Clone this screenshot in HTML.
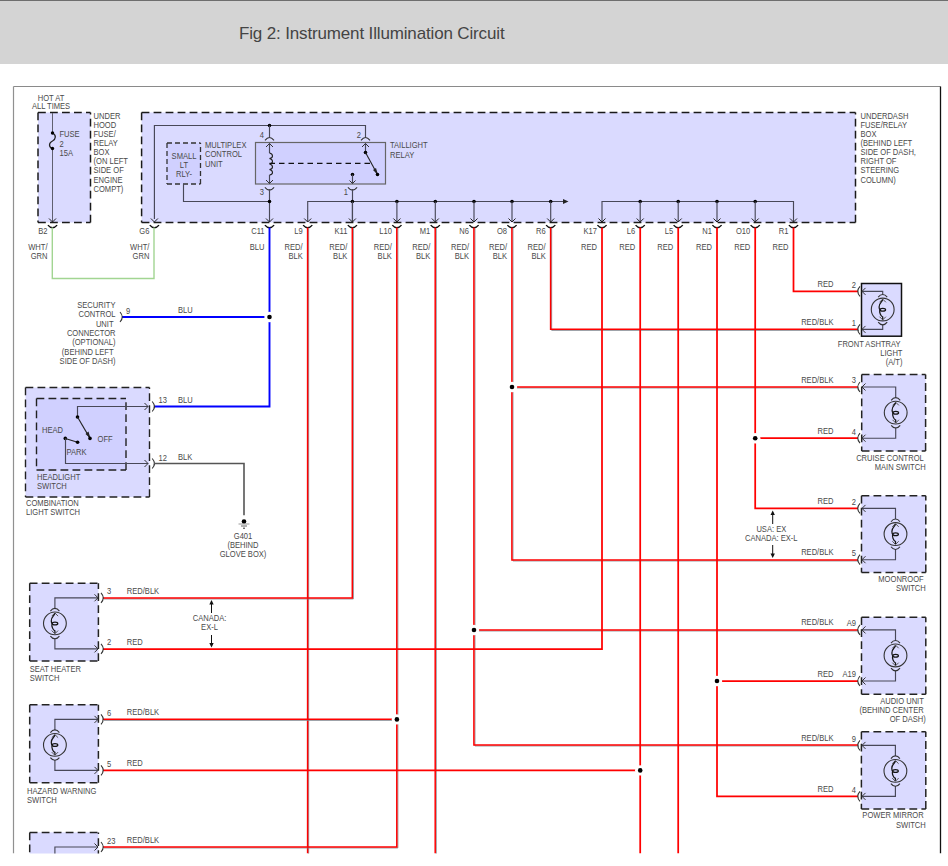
<!DOCTYPE html>
<html><head><meta charset="utf-8"><style>
html,body{margin:0;padding:0;background:#fff;width:948px;height:866px;overflow:hidden}
#hdr{position:absolute;left:0;top:0;width:948px;height:64px;background:#d4d4d4;border-top:1px solid #6e6e6e;box-sizing:border-box}
#ttl{position:absolute;left:239px;top:24px;font-family:"Liberation Sans",sans-serif;font-size:17px;color:#444;white-space:nowrap;letter-spacing:-0.15px}
svg{position:absolute;left:0;top:0}
svg text{white-space:pre;font-family:"Liberation Sans",sans-serif}
</style></head><body>
<div id="hdr"></div><div id="ttl">Fig 2: Instrument Illumination Circuit</div>
<svg width="948" height="866" viewBox="0 0 948 866">
<defs><clipPath id="cp"><rect x="0" y="64" width="948" height="789.5"/></clipPath></defs>
<g clip-path="url(#cp)">
<line x1="13.5" y1="86.5" x2="940.5" y2="86.5" stroke="#8a8a8a" stroke-width="1.2"/>
<line x1="13.5" y1="86.5" x2="13.5" y2="853.5" stroke="#909090" stroke-width="1.2"/>
<line x1="940.5" y1="86.5" x2="940.5" y2="853.5" stroke="#111" stroke-width="1.3"/>
<rect x="38" y="112.5" width="52.5" height="110.0" fill="#dadaff"/>
<line x1="38" y1="112.5" x2="90.5" y2="112.5" stroke="#1a1a1a" stroke-width="1.5" stroke-dasharray="7.8 4.2"/>
<line x1="38" y1="112.5" x2="38" y2="222.5" stroke="#1a1a1a" stroke-width="1.5" stroke-dasharray="7.8 4.2"/>
<line x1="38" y1="222.5" x2="90.5" y2="222.5" stroke="#1a1a1a" stroke-width="1.5" stroke-dasharray="7.8 4.2"/>
<line x1="90.5" y1="222.5" x2="90.5" y2="112.5" stroke="#1a1a1a" stroke-width="1.5" stroke-dasharray="7.8 4.2"/>
<rect x="141.6" y="112.5" width="713.9" height="110.0" fill="#dadaff"/>
<line x1="141.6" y1="112.5" x2="855.5" y2="112.5" stroke="#1a1a1a" stroke-width="1.5" stroke-dasharray="7.8 4.2"/>
<line x1="141.6" y1="112.5" x2="141.6" y2="222.5" stroke="#1a1a1a" stroke-width="1.5" stroke-dasharray="7.8 4.2"/>
<line x1="141.6" y1="222.5" x2="855.5" y2="222.5" stroke="#1a1a1a" stroke-width="1.5" stroke-dasharray="7.8 4.2"/>
<line x1="855.5" y1="222.5" x2="855.5" y2="112.5" stroke="#1a1a1a" stroke-width="1.5" stroke-dasharray="7.8 4.2"/>
<text transform="translate(51 101.0) scale(0.925 1)" font-size="8.2" text-anchor="middle" fill="#4a4a4a">HOT AT</text>
<text transform="translate(51 108.6) scale(0.925 1)" font-size="8.2" text-anchor="middle" fill="#4a4a4a">ALL TIMES</text>
<text transform="translate(93.5 118.8) scale(0.925 1)" font-size="8.2" text-anchor="start" fill="#4a4a4a">UNDER</text>
<text transform="translate(93.5 127.89999999999999) scale(0.925 1)" font-size="8.2" text-anchor="start" fill="#4a4a4a">HOOD</text>
<text transform="translate(93.5 137.0) scale(0.925 1)" font-size="8.2" text-anchor="start" fill="#4a4a4a">FUSE/</text>
<text transform="translate(93.5 146.1) scale(0.925 1)" font-size="8.2" text-anchor="start" fill="#4a4a4a">RELAY</text>
<text transform="translate(93.5 155.2) scale(0.925 1)" font-size="8.2" text-anchor="start" fill="#4a4a4a">BOX</text>
<text transform="translate(93.5 164.3) scale(0.925 1)" font-size="8.2" text-anchor="start" fill="#4a4a4a">(ON LEFT</text>
<text transform="translate(93.5 173.39999999999998) scale(0.925 1)" font-size="8.2" text-anchor="start" fill="#4a4a4a">SIDE OF</text>
<text transform="translate(93.5 182.5) scale(0.925 1)" font-size="8.2" text-anchor="start" fill="#4a4a4a">ENGINE</text>
<text transform="translate(93.5 191.6) scale(0.925 1)" font-size="8.2" text-anchor="start" fill="#4a4a4a">COMPT)</text>
<text transform="translate(59.5 137.0) scale(0.925 1)" font-size="8.2" text-anchor="start" fill="#4a4a4a">FUSE</text>
<text transform="translate(59.5 146.7) scale(0.925 1)" font-size="8.2" text-anchor="start" fill="#4a4a4a">2</text>
<text transform="translate(59.5 156.4) scale(0.925 1)" font-size="8.2" text-anchor="start" fill="#4a4a4a">15A</text>
<line x1="52.5" y1="113" x2="52.5" y2="133" stroke="#606070" stroke-width="1"/>
<line x1="52.5" y1="148.5" x2="52.5" y2="222" stroke="#606070" stroke-width="1"/>
<path d="M52.5 133 C56.5 135,56 139,52.5 141 C48.5 143,48.5 147,52.5 148.5" fill="none" stroke="#222" stroke-width="1.3"/>
<circle cx="52.5" cy="133" r="1.7" fill="#000"/>
<circle cx="52.5" cy="148.5" r="1.7" fill="#000"/>
<text transform="translate(860.5 118.8) scale(0.925 1)" font-size="8.2" text-anchor="start" fill="#4a4a4a">UNDERDASH</text>
<text transform="translate(860.5 127.89999999999999) scale(0.925 1)" font-size="8.2" text-anchor="start" fill="#4a4a4a">FUSE/RELAY</text>
<text transform="translate(860.5 137.0) scale(0.925 1)" font-size="8.2" text-anchor="start" fill="#4a4a4a">BOX</text>
<text transform="translate(860.5 146.1) scale(0.925 1)" font-size="8.2" text-anchor="start" fill="#4a4a4a">(BEHIND LEFT</text>
<text transform="translate(860.5 155.2) scale(0.925 1)" font-size="8.2" text-anchor="start" fill="#4a4a4a">SIDE OF DASH,</text>
<text transform="translate(860.5 164.3) scale(0.925 1)" font-size="8.2" text-anchor="start" fill="#4a4a4a">RIGHT OF</text>
<text transform="translate(860.5 173.39999999999998) scale(0.925 1)" font-size="8.2" text-anchor="start" fill="#4a4a4a">STEERING</text>
<text transform="translate(860.5 182.5) scale(0.925 1)" font-size="8.2" text-anchor="start" fill="#4a4a4a">COLUMN)</text>
<rect x="167" y="143" width="33.5" height="41" fill="#d0d0ff"/>
<line x1="167" y1="143" x2="200.5" y2="143" stroke="#333" stroke-width="1.3" stroke-dasharray="5 3"/>
<line x1="167" y1="143" x2="167" y2="184" stroke="#333" stroke-width="1.3" stroke-dasharray="5 3"/>
<line x1="167" y1="184" x2="200.5" y2="184" stroke="#333" stroke-width="1.3" stroke-dasharray="5 3"/>
<line x1="200.5" y1="184" x2="200.5" y2="143" stroke="#333" stroke-width="1.3" stroke-dasharray="5 3"/>
<text transform="translate(184 159.0) scale(0.925 1)" font-size="8.2" text-anchor="middle" fill="#4a4a4a">SMALL</text>
<text transform="translate(184 167.8) scale(0.925 1)" font-size="8.2" text-anchor="middle" fill="#4a4a4a">LT</text>
<text transform="translate(184 176.6) scale(0.925 1)" font-size="8.2" text-anchor="middle" fill="#4a4a4a">RLY-</text>
<text transform="translate(205 148.0) scale(0.925 1)" font-size="8.2" text-anchor="start" fill="#4a4a4a">MULTIPLEX</text>
<text transform="translate(205 157.4) scale(0.925 1)" font-size="8.2" text-anchor="start" fill="#4a4a4a">CONTROL</text>
<text transform="translate(205 166.8) scale(0.925 1)" font-size="8.2" text-anchor="start" fill="#4a4a4a">UNIT</text>
<rect x="255.5" y="142.5" width="130.0" height="41.5" fill="#d0d0ff" stroke="#666" stroke-width="1.2"/>
<text transform="translate(390 148.0) scale(0.925 1)" font-size="8.2" text-anchor="start" fill="#4a4a4a">TAILLIGHT</text>
<text transform="translate(390 157.6) scale(0.925 1)" font-size="8.2" text-anchor="start" fill="#4a4a4a">RELAY</text>
<polyline points="154.4,219 154.4,125.5 365.5,125.5 365.5,137" fill="none" stroke="#484858" stroke-width="1.15" stroke-linejoin="miter"/>
<circle cx="269.5" cy="125.5" r="1.8" fill="#000"/>
<line x1="269.5" y1="125.5" x2="269.5" y2="137" stroke="#484858" stroke-width="1.15"/>
<path d="M265.0 140.3 Q269.5 134.8 274.0 140.3" fill="none" stroke="#333" stroke-width="1.1"/>
<path d="M361.0 140.3 Q365.5 134.8 370.0 140.3" fill="none" stroke="#333" stroke-width="1.1"/>
<polyline points="266.0,147.0 269.5,143.5 273.0,147.0" fill="none" stroke="#333" stroke-width="1" stroke-linejoin="miter"/>
<polyline points="362.0,147.0 365.5,143.5 369.0,147.0" fill="none" stroke="#333" stroke-width="1" stroke-linejoin="miter"/>
<line x1="269.5" y1="143" x2="269.5" y2="153" stroke="#484858" stroke-width="1.15"/>
<path d="M269.5 153 c4 1,4 5,0 5.5 c4 1,4 5,0 5.5 c4 1,4 5,0 5.5 c4 1,4 5,0 5.5" fill="none" stroke="#222" stroke-width="1.1"/>
<line x1="269.5" y1="175" x2="269.5" y2="183.5" stroke="#484858" stroke-width="1.15"/>
<polyline points="266.0,180.0 269.5,183.5 273.0,180.0" fill="none" stroke="#333" stroke-width="1" stroke-linejoin="miter"/>
<path d="M264.9 187.4 Q267.2 190.1 269.5 190.1 Q271.8 190.1 274.1 187.4" fill="none" stroke="#333" stroke-width="1.1"/>
<line x1="269.5" y1="163.3" x2="371" y2="163.3" stroke="#111" stroke-width="1.2" stroke-dasharray="5.5 4"/>
<line x1="365.5" y1="143" x2="365.5" y2="152.5" stroke="#484858" stroke-width="1.15"/>
<circle cx="365.5" cy="152.5" r="1.8" fill="#000"/>
<line x1="365.5" y1="152.5" x2="377.5" y2="174.5" stroke="#222" stroke-width="1.1"/>
<path d="M373 170 L378 175 L376 168 Z" fill="#222"/>
<circle cx="377.5" cy="174.5" r="1.8" fill="#000"/>
<circle cx="352.5" cy="174.5" r="1.8" fill="#000"/>
<line x1="352.5" y1="174.5" x2="352.5" y2="183.5" stroke="#484858" stroke-width="1.15"/>
<polyline points="349.5,180.5 352.5,183.5 355.5,180.5" fill="none" stroke="#333" stroke-width="1" stroke-linejoin="miter"/>
<path d="M347.9 187.4 Q350.2 190.1 352.5 190.1 Q354.8 190.1 357.1 187.4" fill="none" stroke="#333" stroke-width="1.1"/>
<text transform="translate(264 138) scale(0.925 1)" font-size="8.2" text-anchor="end" fill="#4a4a4a">4</text>
<text transform="translate(361 138) scale(0.925 1)" font-size="8.2" text-anchor="end" fill="#4a4a4a">2</text>
<text transform="translate(264 195) scale(0.925 1)" font-size="8.2" text-anchor="end" fill="#4a4a4a">3</text>
<text transform="translate(348 195) scale(0.925 1)" font-size="8.2" text-anchor="end" fill="#4a4a4a">1</text>
<line x1="269.5" y1="189" x2="269.5" y2="222" stroke="#484858" stroke-width="1.15"/>
<line x1="352.5" y1="189" x2="352.5" y2="222" stroke="#484858" stroke-width="1.15"/>
<polyline points="183.5,184 183.5,201.5 269.5,201.5" fill="none" stroke="#484858" stroke-width="1.15" stroke-linejoin="miter"/>
<circle cx="269.5" cy="201.5" r="1.8" fill="#000"/>
<polyline points="307.7,222 307.7,201.5 564,201.5" fill="none" stroke="#484858" stroke-width="1.15" stroke-linejoin="miter"/>
<path d="M563 199 L568.5 201.5 L563 204 Z" fill="#222"/>
<circle cx="352.4" cy="201.5" r="1.8" fill="#000"/>
<line x1="352.4" y1="201.5" x2="352.4" y2="222" stroke="#484858" stroke-width="1.15"/>
<circle cx="396.9" cy="201.5" r="1.8" fill="#000"/>
<line x1="396.9" y1="201.5" x2="396.9" y2="222" stroke="#484858" stroke-width="1.15"/>
<circle cx="435.3" cy="201.5" r="1.8" fill="#000"/>
<line x1="435.3" y1="201.5" x2="435.3" y2="222" stroke="#484858" stroke-width="1.15"/>
<circle cx="474" cy="201.5" r="1.8" fill="#000"/>
<line x1="474" y1="201.5" x2="474" y2="222" stroke="#484858" stroke-width="1.15"/>
<circle cx="512" cy="201.5" r="1.8" fill="#000"/>
<line x1="512" y1="201.5" x2="512" y2="222" stroke="#484858" stroke-width="1.15"/>
<circle cx="550.7" cy="201.5" r="1.8" fill="#000"/>
<line x1="550.7" y1="201.5" x2="550.7" y2="222" stroke="#484858" stroke-width="1.15"/>
<polyline points="602,222 602,201.5 793.5,201.5 793.5,222" fill="none" stroke="#484858" stroke-width="1.15" stroke-linejoin="miter"/>
<circle cx="640.2" cy="201.5" r="1.8" fill="#000"/>
<line x1="640.2" y1="201.5" x2="640.2" y2="222" stroke="#484858" stroke-width="1.15"/>
<circle cx="678.2" cy="201.5" r="1.8" fill="#000"/>
<line x1="678.2" y1="201.5" x2="678.2" y2="222" stroke="#484858" stroke-width="1.15"/>
<circle cx="717" cy="201.5" r="1.8" fill="#000"/>
<line x1="717" y1="201.5" x2="717" y2="222" stroke="#484858" stroke-width="1.15"/>
<circle cx="755.2" cy="201.5" r="1.8" fill="#000"/>
<line x1="755.2" y1="201.5" x2="755.2" y2="222" stroke="#484858" stroke-width="1.15"/>
<polyline points="49.0,218.5 52.5,222 56.0,218.5" fill="none" stroke="#222" stroke-width="1" stroke-linejoin="miter"/>
<path d="M47.9 225.1 Q50.2 227.79999999999998 52.5 227.79999999999998 Q54.8 227.79999999999998 57.1 225.1" fill="none" stroke="#111" stroke-width="1.4"/>
<text transform="translate(47.5 233.8) scale(0.925 1)" font-size="8.2" text-anchor="end" fill="#4a4a4a">B2</text>
<text transform="translate(47.5 249.5) scale(0.925 1)" font-size="8.2" text-anchor="end" fill="#4a4a4a">WHT/</text>
<text transform="translate(47.5 258.6) scale(0.925 1)" font-size="8.2" text-anchor="end" fill="#4a4a4a">GRN</text>
<polyline points="150.9,218.5 154.4,222 157.9,218.5" fill="none" stroke="#222" stroke-width="1" stroke-linejoin="miter"/>
<path d="M149.8 225.1 Q152.1 227.79999999999998 154.4 227.79999999999998 Q156.70000000000002 227.79999999999998 159.0 225.1" fill="none" stroke="#111" stroke-width="1.4"/>
<text transform="translate(149.4 233.8) scale(0.925 1)" font-size="8.2" text-anchor="end" fill="#4a4a4a">G6</text>
<text transform="translate(149.4 249.5) scale(0.925 1)" font-size="8.2" text-anchor="end" fill="#4a4a4a">WHT/</text>
<text transform="translate(149.4 258.6) scale(0.925 1)" font-size="8.2" text-anchor="end" fill="#4a4a4a">GRN</text>
<polyline points="266.0,218.5 269.5,222 273.0,218.5" fill="none" stroke="#222" stroke-width="1" stroke-linejoin="miter"/>
<path d="M264.9 225.1 Q267.2 227.79999999999998 269.5 227.79999999999998 Q271.8 227.79999999999998 274.1 225.1" fill="none" stroke="#111" stroke-width="1.4"/>
<text transform="translate(264.5 233.8) scale(0.925 1)" font-size="8.2" text-anchor="end" fill="#4a4a4a">C11</text>
<text transform="translate(264.5 249.5) scale(0.925 1)" font-size="8.2" text-anchor="end" fill="#4a4a4a">BLU</text>
<polyline points="304.2,218.5 307.7,222 311.2,218.5" fill="none" stroke="#222" stroke-width="1" stroke-linejoin="miter"/>
<path d="M303.09999999999997 225.1 Q305.4 227.79999999999998 307.7 227.79999999999998 Q310.0 227.79999999999998 312.3 225.1" fill="none" stroke="#111" stroke-width="1.4"/>
<text transform="translate(302.7 233.8) scale(0.925 1)" font-size="8.2" text-anchor="end" fill="#4a4a4a">L9</text>
<text transform="translate(302.7 249.5) scale(0.925 1)" font-size="8.2" text-anchor="end" fill="#4a4a4a">RED/</text>
<text transform="translate(302.7 258.6) scale(0.925 1)" font-size="8.2" text-anchor="end" fill="#4a4a4a">BLK</text>
<polyline points="348.9,218.5 352.4,222 355.9,218.5" fill="none" stroke="#222" stroke-width="1" stroke-linejoin="miter"/>
<path d="M347.79999999999995 225.1 Q350.09999999999997 227.79999999999998 352.4 227.79999999999998 Q354.7 227.79999999999998 357.0 225.1" fill="none" stroke="#111" stroke-width="1.4"/>
<text transform="translate(347.4 233.8) scale(0.925 1)" font-size="8.2" text-anchor="end" fill="#4a4a4a">K11</text>
<text transform="translate(347.4 249.5) scale(0.925 1)" font-size="8.2" text-anchor="end" fill="#4a4a4a">RED/</text>
<text transform="translate(347.4 258.6) scale(0.925 1)" font-size="8.2" text-anchor="end" fill="#4a4a4a">BLK</text>
<polyline points="393.4,218.5 396.9,222 400.4,218.5" fill="none" stroke="#222" stroke-width="1" stroke-linejoin="miter"/>
<path d="M392.29999999999995 225.1 Q394.59999999999997 227.79999999999998 396.9 227.79999999999998 Q399.2 227.79999999999998 401.5 225.1" fill="none" stroke="#111" stroke-width="1.4"/>
<text transform="translate(391.9 233.8) scale(0.925 1)" font-size="8.2" text-anchor="end" fill="#4a4a4a">L10</text>
<text transform="translate(391.9 249.5) scale(0.925 1)" font-size="8.2" text-anchor="end" fill="#4a4a4a">RED/</text>
<text transform="translate(391.9 258.6) scale(0.925 1)" font-size="8.2" text-anchor="end" fill="#4a4a4a">BLK</text>
<polyline points="431.8,218.5 435.3,222 438.8,218.5" fill="none" stroke="#222" stroke-width="1" stroke-linejoin="miter"/>
<path d="M430.7 225.1 Q433.0 227.79999999999998 435.3 227.79999999999998 Q437.6 227.79999999999998 439.90000000000003 225.1" fill="none" stroke="#111" stroke-width="1.4"/>
<text transform="translate(430.3 233.8) scale(0.925 1)" font-size="8.2" text-anchor="end" fill="#4a4a4a">M1</text>
<text transform="translate(430.3 249.5) scale(0.925 1)" font-size="8.2" text-anchor="end" fill="#4a4a4a">RED/</text>
<text transform="translate(430.3 258.6) scale(0.925 1)" font-size="8.2" text-anchor="end" fill="#4a4a4a">BLK</text>
<polyline points="470.5,218.5 474,222 477.5,218.5" fill="none" stroke="#222" stroke-width="1" stroke-linejoin="miter"/>
<path d="M469.4 225.1 Q471.7 227.79999999999998 474 227.79999999999998 Q476.3 227.79999999999998 478.6 225.1" fill="none" stroke="#111" stroke-width="1.4"/>
<text transform="translate(469 233.8) scale(0.925 1)" font-size="8.2" text-anchor="end" fill="#4a4a4a">N6</text>
<text transform="translate(469 249.5) scale(0.925 1)" font-size="8.2" text-anchor="end" fill="#4a4a4a">RED/</text>
<text transform="translate(469 258.6) scale(0.925 1)" font-size="8.2" text-anchor="end" fill="#4a4a4a">BLK</text>
<polyline points="508.5,218.5 512,222 515.5,218.5" fill="none" stroke="#222" stroke-width="1" stroke-linejoin="miter"/>
<path d="M507.4 225.1 Q509.7 227.79999999999998 512 227.79999999999998 Q514.3 227.79999999999998 516.6 225.1" fill="none" stroke="#111" stroke-width="1.4"/>
<text transform="translate(507 233.8) scale(0.925 1)" font-size="8.2" text-anchor="end" fill="#4a4a4a">O8</text>
<text transform="translate(507 249.5) scale(0.925 1)" font-size="8.2" text-anchor="end" fill="#4a4a4a">RED/</text>
<text transform="translate(507 258.6) scale(0.925 1)" font-size="8.2" text-anchor="end" fill="#4a4a4a">BLK</text>
<polyline points="547.2,218.5 550.7,222 554.2,218.5" fill="none" stroke="#222" stroke-width="1" stroke-linejoin="miter"/>
<path d="M546.1 225.1 Q548.4000000000001 227.79999999999998 550.7 227.79999999999998 Q553.0 227.79999999999998 555.3000000000001 225.1" fill="none" stroke="#111" stroke-width="1.4"/>
<text transform="translate(545.7 233.8) scale(0.925 1)" font-size="8.2" text-anchor="end" fill="#4a4a4a">R6</text>
<text transform="translate(545.7 249.5) scale(0.925 1)" font-size="8.2" text-anchor="end" fill="#4a4a4a">RED/</text>
<text transform="translate(545.7 258.6) scale(0.925 1)" font-size="8.2" text-anchor="end" fill="#4a4a4a">BLK</text>
<polyline points="598.5,218.5 602,222 605.5,218.5" fill="none" stroke="#222" stroke-width="1" stroke-linejoin="miter"/>
<path d="M597.4 225.1 Q599.7 227.79999999999998 602 227.79999999999998 Q604.3 227.79999999999998 606.6 225.1" fill="none" stroke="#111" stroke-width="1.4"/>
<text transform="translate(597 233.8) scale(0.925 1)" font-size="8.2" text-anchor="end" fill="#4a4a4a">K17</text>
<text transform="translate(597 249.5) scale(0.925 1)" font-size="8.2" text-anchor="end" fill="#4a4a4a">RED</text>
<polyline points="636.7,218.5 640.2,222 643.7,218.5" fill="none" stroke="#222" stroke-width="1" stroke-linejoin="miter"/>
<path d="M635.6 225.1 Q637.9000000000001 227.79999999999998 640.2 227.79999999999998 Q642.5 227.79999999999998 644.8000000000001 225.1" fill="none" stroke="#111" stroke-width="1.4"/>
<text transform="translate(635.2 233.8) scale(0.925 1)" font-size="8.2" text-anchor="end" fill="#4a4a4a">L6</text>
<text transform="translate(635.2 249.5) scale(0.925 1)" font-size="8.2" text-anchor="end" fill="#4a4a4a">RED</text>
<polyline points="674.7,218.5 678.2,222 681.7,218.5" fill="none" stroke="#222" stroke-width="1" stroke-linejoin="miter"/>
<path d="M673.6 225.1 Q675.9000000000001 227.79999999999998 678.2 227.79999999999998 Q680.5 227.79999999999998 682.8000000000001 225.1" fill="none" stroke="#111" stroke-width="1.4"/>
<text transform="translate(673.2 233.8) scale(0.925 1)" font-size="8.2" text-anchor="end" fill="#4a4a4a">L5</text>
<text transform="translate(673.2 249.5) scale(0.925 1)" font-size="8.2" text-anchor="end" fill="#4a4a4a">RED</text>
<polyline points="713.5,218.5 717,222 720.5,218.5" fill="none" stroke="#222" stroke-width="1" stroke-linejoin="miter"/>
<path d="M712.4 225.1 Q714.7 227.79999999999998 717 227.79999999999998 Q719.3 227.79999999999998 721.6 225.1" fill="none" stroke="#111" stroke-width="1.4"/>
<text transform="translate(712 233.8) scale(0.925 1)" font-size="8.2" text-anchor="end" fill="#4a4a4a">N1</text>
<text transform="translate(712 249.5) scale(0.925 1)" font-size="8.2" text-anchor="end" fill="#4a4a4a">RED</text>
<polyline points="751.7,218.5 755.2,222 758.7,218.5" fill="none" stroke="#222" stroke-width="1" stroke-linejoin="miter"/>
<path d="M750.6 225.1 Q752.9000000000001 227.79999999999998 755.2 227.79999999999998 Q757.5 227.79999999999998 759.8000000000001 225.1" fill="none" stroke="#111" stroke-width="1.4"/>
<text transform="translate(750.2 233.8) scale(0.925 1)" font-size="8.2" text-anchor="end" fill="#4a4a4a">O10</text>
<text transform="translate(750.2 249.5) scale(0.925 1)" font-size="8.2" text-anchor="end" fill="#4a4a4a">RED</text>
<polyline points="790.0,218.5 793.5,222 797.0,218.5" fill="none" stroke="#222" stroke-width="1" stroke-linejoin="miter"/>
<path d="M788.9 225.1 Q791.2 227.79999999999998 793.5 227.79999999999998 Q795.8 227.79999999999998 798.1 225.1" fill="none" stroke="#111" stroke-width="1.4"/>
<text transform="translate(788.5 233.8) scale(0.925 1)" font-size="8.2" text-anchor="end" fill="#4a4a4a">R1</text>
<text transform="translate(788.5 249.5) scale(0.925 1)" font-size="8.2" text-anchor="end" fill="#4a4a4a">RED</text>
<polyline points="52.3,227.5 52.3,278.5 154,278.5 154,227.5" fill="none" stroke="#a2d592" stroke-width="1.4" stroke-linejoin="miter"/>
<polyline points="308.65,228.45 308.65,854.45" fill="none" stroke="#7a7f88" stroke-width="0.85" stroke-linejoin="miter"/>
<polyline points="307.59999999999997,227.4 307.59999999999997,853.4" fill="none" stroke="#ff0000" stroke-width="1.5" stroke-linejoin="miter"/>
<polyline points="353.34999999999997,228.45 353.34999999999997,598.95 103.95,598.95" fill="none" stroke="#7a7f88" stroke-width="0.85" stroke-linejoin="miter"/>
<polyline points="352.29999999999995,227.4 352.29999999999995,597.9 102.9,597.9" fill="none" stroke="#ff0000" stroke-width="1.5" stroke-linejoin="miter"/>
<polyline points="397.84999999999997,228.45 397.84999999999997,847.95 103.95,847.95" fill="none" stroke="#7a7f88" stroke-width="0.85" stroke-linejoin="miter"/>
<polyline points="396.79999999999995,227.4 396.79999999999995,846.9 102.9,846.9" fill="none" stroke="#ff0000" stroke-width="1.5" stroke-linejoin="miter"/>
<polyline points="397.84999999999997,720.35 103.95,720.35" fill="none" stroke="#7a7f88" stroke-width="0.85" stroke-linejoin="miter"/>
<polyline points="396.79999999999995,719.3 102.9,719.3" fill="none" stroke="#ff0000" stroke-width="1.5" stroke-linejoin="miter"/>
<polyline points="436.25,228.45 436.25,854.45" fill="none" stroke="#7a7f88" stroke-width="0.85" stroke-linejoin="miter"/>
<polyline points="435.2,227.4 435.2,853.4" fill="none" stroke="#ff0000" stroke-width="1.5" stroke-linejoin="miter"/>
<polyline points="474.95,228.45 474.95,745.95 858.95,745.95" fill="none" stroke="#7a7f88" stroke-width="0.85" stroke-linejoin="miter"/>
<polyline points="473.9,227.4 473.9,744.9 857.9,744.9" fill="none" stroke="#ff0000" stroke-width="1.5" stroke-linejoin="miter"/>
<polyline points="474.95,630.95 858.95,630.95" fill="none" stroke="#7a7f88" stroke-width="0.85" stroke-linejoin="miter"/>
<polyline points="473.9,629.9 857.9,629.9" fill="none" stroke="#ff0000" stroke-width="1.5" stroke-linejoin="miter"/>
<polyline points="512.95,228.45 512.95,560.95 858.95,560.95" fill="none" stroke="#7a7f88" stroke-width="0.85" stroke-linejoin="miter"/>
<polyline points="511.9,227.4 511.9,559.9 857.9,559.9" fill="none" stroke="#ff0000" stroke-width="1.5" stroke-linejoin="miter"/>
<polyline points="512.95,387.95 858.95,387.95" fill="none" stroke="#7a7f88" stroke-width="0.85" stroke-linejoin="miter"/>
<polyline points="511.9,386.9 857.9,386.9" fill="none" stroke="#ff0000" stroke-width="1.5" stroke-linejoin="miter"/>
<polyline points="551.6500000000001,228.45 551.6500000000001,330.34999999999997 858.95,330.34999999999997" fill="none" stroke="#7a7f88" stroke-width="0.85" stroke-linejoin="miter"/>
<polyline points="550.6,227.4 550.6,329.29999999999995 857.9,329.29999999999995" fill="none" stroke="#ff0000" stroke-width="1.5" stroke-linejoin="miter"/>
<polyline points="602,227.5 602,649 103,649" fill="none" stroke="#ff0000" stroke-width="1.75" stroke-linejoin="miter"/>
<polyline points="640.2,227.5 640.2,853.5" fill="none" stroke="#ff0000" stroke-width="1.75" stroke-linejoin="miter"/>
<polyline points="640.2,770.4 103,770.4" fill="none" stroke="#ff0000" stroke-width="1.75" stroke-linejoin="miter"/>
<polyline points="678.2,227.5 678.2,853.5" fill="none" stroke="#ff0000" stroke-width="1.75" stroke-linejoin="miter"/>
<polyline points="717,227.5 717,796.4 858,796.4" fill="none" stroke="#ff0000" stroke-width="1.75" stroke-linejoin="miter"/>
<polyline points="717,681 858,681" fill="none" stroke="#ff0000" stroke-width="1.75" stroke-linejoin="miter"/>
<polyline points="755.2,227.5 755.2,508.4 858,508.4" fill="none" stroke="#ff0000" stroke-width="1.75" stroke-linejoin="miter"/>
<polyline points="755.2,438.2 858,438.2" fill="none" stroke="#ff0000" stroke-width="1.75" stroke-linejoin="miter"/>
<polyline points="793.5,227.5 793.5,291.4 858,291.4" fill="none" stroke="#ff0000" stroke-width="1.75" stroke-linejoin="miter"/>
<circle cx="396.9" cy="719.4" r="5.2" fill="#fff"/>
<circle cx="396.9" cy="719.4" r="2.3" fill="#000"/>
<circle cx="474" cy="630" r="5.2" fill="#fff"/>
<circle cx="474" cy="630" r="2.3" fill="#000"/>
<circle cx="512" cy="387" r="5.2" fill="#fff"/>
<circle cx="512" cy="387" r="2.3" fill="#000"/>
<circle cx="640.2" cy="770.4" r="5.2" fill="#fff"/>
<circle cx="640.2" cy="770.4" r="2.3" fill="#000"/>
<circle cx="717" cy="681" r="5.2" fill="#fff"/>
<circle cx="717" cy="681" r="2.3" fill="#000"/>
<circle cx="755.2" cy="438.2" r="5.2" fill="#fff"/>
<circle cx="755.2" cy="438.2" r="2.3" fill="#000"/>
<polyline points="269.5,227.5 269.5,406.5 154,406.5" fill="none" stroke="#0000ff" stroke-width="1.9" stroke-linejoin="miter"/>
<line x1="122" y1="317" x2="269.5" y2="317" stroke="#0000ff" stroke-width="1.9"/>
<circle cx="269.5" cy="317" r="5.2" fill="#fff"/>
<circle cx="269.5" cy="317" r="2.3" fill="#000"/>
<text transform="translate(115.5 308.0) scale(0.925 1)" font-size="8.2" text-anchor="end" fill="#4a4a4a">SECURITY</text>
<text transform="translate(115.5 317.35) scale(0.925 1)" font-size="8.2" text-anchor="end" fill="#4a4a4a">CONTROL</text>
<text transform="translate(115.5 326.7) scale(0.925 1)" font-size="8.2" text-anchor="end" fill="#4a4a4a">UNIT </text>
<text transform="translate(115.5 336.05) scale(0.925 1)" font-size="8.2" text-anchor="end" fill="#4a4a4a">CONNECTOR</text>
<text transform="translate(115.5 345.4) scale(0.925 1)" font-size="8.2" text-anchor="end" fill="#4a4a4a">(OPTIONAL)</text>
<text transform="translate(115.5 354.75) scale(0.925 1)" font-size="8.2" text-anchor="end" fill="#4a4a4a">(BEHIND LEFT </text>
<text transform="translate(115.5 364.1) scale(0.925 1)" font-size="8.2" text-anchor="end" fill="#4a4a4a">SIDE OF DASH)</text>
<path d="M120 312 Q124.5 317 120 322" fill="none" stroke="#333" stroke-width="1.1"/>
<text transform="translate(126 314) scale(0.925 1)" font-size="8.2" text-anchor="start" fill="#4a4a4a">9</text>
<text transform="translate(178 313) scale(0.925 1)" font-size="8.2" text-anchor="start" fill="#4a4a4a">BLU</text>
<rect x="25.5" y="387.5" width="124.0" height="109.5" fill="#dadaff"/>
<line x1="25.5" y1="387.5" x2="149.5" y2="387.5" stroke="#222" stroke-width="1.4" stroke-dasharray="7.8 4.2"/>
<line x1="25.5" y1="387.5" x2="25.5" y2="497" stroke="#222" stroke-width="1.4" stroke-dasharray="7.8 4.2"/>
<line x1="25.5" y1="497" x2="149.5" y2="497" stroke="#222" stroke-width="1.4" stroke-dasharray="7.8 4.2"/>
<line x1="149.5" y1="497" x2="149.5" y2="387.5" stroke="#222" stroke-width="1.4" stroke-dasharray="7.8 4.2"/>
<rect x="36.5" y="398.5" width="89.5" height="71.5" fill="#d0d0ff"/>
<line x1="36.5" y1="398.5" x2="126" y2="398.5" stroke="#222" stroke-width="1.4" stroke-dasharray="7.8 4.2"/>
<line x1="36.5" y1="398.5" x2="36.5" y2="470" stroke="#222" stroke-width="1.4" stroke-dasharray="7.8 4.2"/>
<line x1="36.5" y1="470" x2="126" y2="470" stroke="#222" stroke-width="1.4" stroke-dasharray="7.8 4.2"/>
<line x1="126" y1="470" x2="126" y2="398.5" stroke="#222" stroke-width="1.4" stroke-dasharray="7.8 4.2"/>
<polyline points="77.5,417 77.5,406.5 148,406.5" fill="none" stroke="#484858" stroke-width="1.15" stroke-linejoin="miter"/>
<polyline points="144.5,403.0 148,406.5 144.5,410.0" fill="none" stroke="#333" stroke-width="1" stroke-linejoin="miter"/>
<circle cx="77.5" cy="417" r="1.8" fill="#000"/>
<line x1="77.5" y1="417" x2="90" y2="438.4" stroke="#222" stroke-width="1.1"/>
<path d="M85.5 434 L90.5 438.5 L88.5 431.5 Z" fill="#222"/>
<circle cx="90" cy="438.4" r="1.8" fill="#000"/>
<circle cx="65.3" cy="438.4" r="1.8" fill="#000"/>
<line x1="65.3" y1="438.4" x2="77.6" y2="442.3" stroke="#222" stroke-width="1.1"/>
<circle cx="77.6" cy="442.3" r="1.8" fill="#000"/>
<polyline points="65.5,438.4 65.5,463.5 148,463.5" fill="none" stroke="#484858" stroke-width="1.15" stroke-linejoin="miter"/>
<polyline points="144.5,460.0 148,463.5 144.5,467.0" fill="none" stroke="#333" stroke-width="1" stroke-linejoin="miter"/>
<path d="M152.2 401.5 Q156.7 406.5 152.2 411.5" fill="none" stroke="#333" stroke-width="1.1"/>
<path d="M152.2 458.5 Q156.7 463.5 152.2 468.5" fill="none" stroke="#333" stroke-width="1.1"/>
<text transform="translate(42 432.5) scale(0.925 1)" font-size="8.2" text-anchor="start" fill="#4a4a4a">HEAD</text>
<text transform="translate(97.5 441.5) scale(0.925 1)" font-size="8.2" text-anchor="start" fill="#4a4a4a">OFF</text>
<text transform="translate(66.5 454.5) scale(0.925 1)" font-size="8.2" text-anchor="start" fill="#4a4a4a">PARK</text>
<text transform="translate(158.5 403) scale(0.925 1)" font-size="8.2" text-anchor="start" fill="#4a4a4a">13</text>
<text transform="translate(178 402.5) scale(0.925 1)" font-size="8.2" text-anchor="start" fill="#4a4a4a">BLU</text>
<text transform="translate(158.5 460.5) scale(0.925 1)" font-size="8.2" text-anchor="start" fill="#4a4a4a">12</text>
<text transform="translate(178 460) scale(0.925 1)" font-size="8.2" text-anchor="start" fill="#4a4a4a">BLK</text>
<text transform="translate(37 479.5) scale(0.925 1)" font-size="8.2" text-anchor="start" fill="#4a4a4a">HEADLIGHT</text>
<text transform="translate(37 488.7) scale(0.925 1)" font-size="8.2" text-anchor="start" fill="#4a4a4a">SWITCH</text>
<text transform="translate(26 505.5) scale(0.925 1)" font-size="8.2" text-anchor="start" fill="#4a4a4a">COMBINATION</text>
<text transform="translate(26 515.1) scale(0.925 1)" font-size="8.2" text-anchor="start" fill="#4a4a4a">LIGHT SWITCH</text>
<polyline points="154,463.5 244,463.5 244,515.3" fill="none" stroke="#555" stroke-width="1.6" stroke-linejoin="miter"/>
<circle cx="244" cy="521.6" r="2.3" fill="#000"/>
<line x1="238.5" y1="524" x2="249.5" y2="524" stroke="#aaa" stroke-width="1.2"/>
<line x1="241" y1="526" x2="247" y2="526" stroke="#666" stroke-width="1"/>
<line x1="243" y1="528.2" x2="245" y2="528.2" stroke="#333" stroke-width="1"/>
<text transform="translate(243 538.5) scale(0.925 1)" font-size="8.2" text-anchor="middle" fill="#4a4a4a">G401</text>
<text transform="translate(243 547.5) scale(0.925 1)" font-size="8.2" text-anchor="middle" fill="#4a4a4a">(BEHIND</text>
<text transform="translate(243 556.5) scale(0.925 1)" font-size="8.2" text-anchor="middle" fill="#4a4a4a">GLOVE BOX)</text>
<rect x="861.5" y="283.5" width="40.0" height="52.69999999999999" fill="#dadaff" stroke="#111" stroke-width="1.5"/>
<polyline points="862,291.4 882.7,291.4 882.7,294.5" fill="none" stroke="#484858" stroke-width="1.15" stroke-linejoin="miter"/>
<polyline points="862,329.4 882.7,329.4 882.7,324.5" fill="none" stroke="#484858" stroke-width="1.15" stroke-linejoin="miter"/>
<circle cx="882.7" cy="309.5" r="11.4" fill="none" stroke="#333" stroke-width="1.1"/>
<path d="M878.2 297.20000000000005 Q880.2 294.5 882.7 294.5 Q885.2 294.5 887.2 297.20000000000005" fill="none" stroke="#333" stroke-width="1.1"/>
<path d="M878.2 322.2 Q880.2 324.9 882.7 324.9 Q885.2 324.9 887.2 322.2" fill="none" stroke="#333" stroke-width="1.1"/>
<polyline points="879.5,302.3 882.7,299.1 885.9000000000001,302.3" fill="none" stroke="#555" stroke-width="1" stroke-linejoin="miter"/>
<polyline points="879.5,316.7 882.7,319.9 885.9000000000001,316.7" fill="none" stroke="#555" stroke-width="1" stroke-linejoin="miter"/>
<path d="M882.7 299.6 C882.2 302.0,878.9000000000001 303.0,879.1 307.0 Q879.2 309.2 879.9000000000001 309.7 C879.1 312.5,880.7 316.0,882.7 317.0 L882.7 319.4" fill="none" stroke="#151515" stroke-width="1.25"/>
<ellipse cx="882.8000000000001" cy="309.7" rx="2.8" ry="1.4" fill="none" stroke="#151515" stroke-width="1.25"/>
<polyline points="865.5,287.9 862,291.4 865.5,294.9" fill="none" stroke="#333" stroke-width="1" stroke-linejoin="miter"/>
<path d="M860 286.4 Q855.5 291.4 860 296.4" fill="none" stroke="#333" stroke-width="1.1"/>
<text transform="translate(856 287.79999999999995) scale(0.925 1)" font-size="8.2" text-anchor="end" fill="#4a4a4a">2</text>
<text transform="translate(833.5 286.9) scale(0.925 1)" font-size="8.2" text-anchor="end" fill="#4a4a4a">RED</text>
<polyline points="865.5,325.9 862,329.4 865.5,332.9" fill="none" stroke="#333" stroke-width="1" stroke-linejoin="miter"/>
<path d="M860 324.4 Q855.5 329.4 860 334.4" fill="none" stroke="#333" stroke-width="1.1"/>
<text transform="translate(856 325.79999999999995) scale(0.925 1)" font-size="8.2" text-anchor="end" fill="#4a4a4a">1</text>
<text transform="translate(833.5 324.9) scale(0.925 1)" font-size="8.2" text-anchor="end" fill="#4a4a4a">RED/BLK</text>
<text transform="translate(902.5 346.8) scale(0.925 1)" font-size="8.2" text-anchor="end" fill="#4a4a4a">FRONT ASHTRAY </text>
<text transform="translate(902.5 356.1) scale(0.925 1)" font-size="8.2" text-anchor="end" fill="#4a4a4a">LIGHT</text>
<text transform="translate(902.5 365.40000000000003) scale(0.925 1)" font-size="8.2" text-anchor="end" fill="#4a4a4a">(A/T)</text>
<rect x="861.7" y="374.5" width="63.89999999999998" height="76.39999999999998" fill="#dadaff"/>
<line x1="861.7" y1="374.5" x2="925.6" y2="374.5" stroke="#222" stroke-width="1.5" stroke-dasharray="7.8 4.2"/>
<line x1="861.7" y1="374.5" x2="861.7" y2="450.9" stroke="#222" stroke-width="1.5" stroke-dasharray="7.8 4.2"/>
<line x1="861.7" y1="450.9" x2="925.6" y2="450.9" stroke="#222" stroke-width="1.5" stroke-dasharray="7.8 4.2"/>
<line x1="925.6" y1="450.9" x2="925.6" y2="374.5" stroke="#222" stroke-width="1.5" stroke-dasharray="7.8 4.2"/>
<polyline points="862,387 895.7,387 895.7,397.6" fill="none" stroke="#484858" stroke-width="1.15" stroke-linejoin="miter"/>
<polyline points="862,438.2 895.7,438.2 895.7,427.6" fill="none" stroke="#484858" stroke-width="1.15" stroke-linejoin="miter"/>
<circle cx="895.7" cy="412.6" r="11.4" fill="none" stroke="#333" stroke-width="1.1"/>
<path d="M891.2 400.30000000000007 Q893.2 397.6 895.7 397.6 Q898.2 397.6 900.2 400.30000000000007" fill="none" stroke="#333" stroke-width="1.1"/>
<path d="M891.2 425.3 Q893.2 428.0 895.7 428.0 Q898.2 428.0 900.2 425.3" fill="none" stroke="#333" stroke-width="1.1"/>
<polyline points="892.5,405.40000000000003 895.7,402.20000000000005 898.9000000000001,405.40000000000003" fill="none" stroke="#555" stroke-width="1" stroke-linejoin="miter"/>
<polyline points="892.5,419.8 895.7,423.0 898.9000000000001,419.8" fill="none" stroke="#555" stroke-width="1" stroke-linejoin="miter"/>
<path d="M895.7 402.70000000000005 C895.2 405.1,891.9000000000001 406.1,892.1 410.1 Q892.2 412.3 892.9000000000001 412.8 C892.1 415.6,893.7 419.1,895.7 420.1 L895.7 422.5" fill="none" stroke="#151515" stroke-width="1.25"/>
<ellipse cx="895.8000000000001" cy="412.8" rx="2.8" ry="1.4" fill="none" stroke="#151515" stroke-width="1.25"/>
<polyline points="865.5,383.5 862,387 865.5,390.5" fill="none" stroke="#333" stroke-width="1" stroke-linejoin="miter"/>
<path d="M860 382 Q855.5 387 860 392" fill="none" stroke="#333" stroke-width="1.1"/>
<text transform="translate(856 383.4) scale(0.925 1)" font-size="8.2" text-anchor="end" fill="#4a4a4a">3</text>
<text transform="translate(833.5 382.5) scale(0.925 1)" font-size="8.2" text-anchor="end" fill="#4a4a4a">RED/BLK</text>
<polyline points="865.5,434.7 862,438.2 865.5,441.7" fill="none" stroke="#333" stroke-width="1" stroke-linejoin="miter"/>
<path d="M860 433.2 Q855.5 438.2 860 443.2" fill="none" stroke="#333" stroke-width="1.1"/>
<text transform="translate(856 434.59999999999997) scale(0.925 1)" font-size="8.2" text-anchor="end" fill="#4a4a4a">4</text>
<text transform="translate(833.5 433.7) scale(0.925 1)" font-size="8.2" text-anchor="end" fill="#4a4a4a">RED</text>
<text transform="translate(925.6 460.5) scale(0.925 1)" font-size="8.2" text-anchor="end" fill="#4a4a4a">CRUISE CONTROL </text>
<text transform="translate(925.6 469.9) scale(0.925 1)" font-size="8.2" text-anchor="end" fill="#4a4a4a">MAIN SWITCH</text>
<rect x="861.5" y="495.7" width="64.29999999999995" height="76.69999999999999" fill="#dadaff"/>
<line x1="861.5" y1="495.7" x2="925.8" y2="495.7" stroke="#222" stroke-width="1.5" stroke-dasharray="7.8 4.2"/>
<line x1="861.5" y1="495.7" x2="861.5" y2="572.4" stroke="#222" stroke-width="1.5" stroke-dasharray="7.8 4.2"/>
<line x1="861.5" y1="572.4" x2="925.8" y2="572.4" stroke="#222" stroke-width="1.5" stroke-dasharray="7.8 4.2"/>
<line x1="925.8" y1="572.4" x2="925.8" y2="495.7" stroke="#222" stroke-width="1.5" stroke-dasharray="7.8 4.2"/>
<polyline points="862,508.4 895.5,508.4 895.5,519.05" fill="none" stroke="#484858" stroke-width="1.15" stroke-linejoin="miter"/>
<polyline points="862,559.7 895.5,559.7 895.5,549.05" fill="none" stroke="#484858" stroke-width="1.15" stroke-linejoin="miter"/>
<circle cx="895.5" cy="534.05" r="11.4" fill="none" stroke="#333" stroke-width="1.1"/>
<path d="M891.0 521.75 Q893.0 519.05 895.5 519.05 Q898.0 519.05 900.0 521.75" fill="none" stroke="#333" stroke-width="1.1"/>
<path d="M891.0 546.7499999999999 Q893.0 549.4499999999999 895.5 549.4499999999999 Q898.0 549.4499999999999 900.0 546.7499999999999" fill="none" stroke="#333" stroke-width="1.1"/>
<polyline points="892.3,526.85 895.5,523.65 898.7,526.85" fill="none" stroke="#555" stroke-width="1" stroke-linejoin="miter"/>
<polyline points="892.3,541.2499999999999 895.5,544.4499999999999 898.7,541.2499999999999" fill="none" stroke="#555" stroke-width="1" stroke-linejoin="miter"/>
<path d="M895.5 524.15 C895.0 526.55,891.7 527.55,891.9 531.55 Q892.0 533.75 892.7 534.25 C891.9 537.05,893.5 540.55,895.5 541.55 L895.5 543.9499999999999" fill="none" stroke="#151515" stroke-width="1.25"/>
<ellipse cx="895.6" cy="534.25" rx="2.8" ry="1.4" fill="none" stroke="#151515" stroke-width="1.25"/>
<polyline points="865.5,504.9 862,508.4 865.5,511.9" fill="none" stroke="#333" stroke-width="1" stroke-linejoin="miter"/>
<path d="M860 503.4 Q855.5 508.4 860 513.4" fill="none" stroke="#333" stroke-width="1.1"/>
<text transform="translate(856 504.79999999999995) scale(0.925 1)" font-size="8.2" text-anchor="end" fill="#4a4a4a">2</text>
<text transform="translate(833.5 503.9) scale(0.925 1)" font-size="8.2" text-anchor="end" fill="#4a4a4a">RED</text>
<polyline points="865.5,556.2 862,559.7 865.5,563.2" fill="none" stroke="#333" stroke-width="1" stroke-linejoin="miter"/>
<path d="M860 554.7 Q855.5 559.7 860 564.7" fill="none" stroke="#333" stroke-width="1.1"/>
<text transform="translate(856 556.1) scale(0.925 1)" font-size="8.2" text-anchor="end" fill="#4a4a4a">5</text>
<text transform="translate(833.5 555.2) scale(0.925 1)" font-size="8.2" text-anchor="end" fill="#4a4a4a">RED/BLK</text>
<text transform="translate(925.8 582.2) scale(0.925 1)" font-size="8.2" text-anchor="end" fill="#4a4a4a">MOONROOF </text>
<text transform="translate(925.8 591.4000000000001) scale(0.925 1)" font-size="8.2" text-anchor="end" fill="#4a4a4a">SWITCH</text>
<rect x="861.5" y="617.2" width="64.29999999999995" height="77.0" fill="#dadaff"/>
<line x1="861.5" y1="617.2" x2="925.8" y2="617.2" stroke="#222" stroke-width="1.5" stroke-dasharray="7.8 4.2"/>
<line x1="861.5" y1="617.2" x2="861.5" y2="694.2" stroke="#222" stroke-width="1.5" stroke-dasharray="7.8 4.2"/>
<line x1="861.5" y1="694.2" x2="925.8" y2="694.2" stroke="#222" stroke-width="1.5" stroke-dasharray="7.8 4.2"/>
<line x1="925.8" y1="694.2" x2="925.8" y2="617.2" stroke="#222" stroke-width="1.5" stroke-dasharray="7.8 4.2"/>
<polyline points="862,629.9 895.5,629.9 895.5,640.45" fill="none" stroke="#484858" stroke-width="1.15" stroke-linejoin="miter"/>
<polyline points="862,681 895.5,681 895.5,670.45" fill="none" stroke="#484858" stroke-width="1.15" stroke-linejoin="miter"/>
<circle cx="895.5" cy="655.45" r="11.4" fill="none" stroke="#333" stroke-width="1.1"/>
<path d="M891.0 643.1500000000001 Q893.0 640.45 895.5 640.45 Q898.0 640.45 900.0 643.1500000000001" fill="none" stroke="#333" stroke-width="1.1"/>
<path d="M891.0 668.15 Q893.0 670.85 895.5 670.85 Q898.0 670.85 900.0 668.15" fill="none" stroke="#333" stroke-width="1.1"/>
<polyline points="892.3,648.2500000000001 895.5,645.0500000000001 898.7,648.2500000000001" fill="none" stroke="#555" stroke-width="1" stroke-linejoin="miter"/>
<polyline points="892.3,662.65 895.5,665.85 898.7,662.65" fill="none" stroke="#555" stroke-width="1" stroke-linejoin="miter"/>
<path d="M895.5 645.5500000000001 C895.0 647.95,891.7 648.95,891.9 652.95 Q892.0 655.1500000000001 892.7 655.6500000000001 C891.9 658.45,893.5 661.95,895.5 662.95 L895.5 665.35" fill="none" stroke="#151515" stroke-width="1.25"/>
<ellipse cx="895.6" cy="655.6500000000001" rx="2.8" ry="1.4" fill="none" stroke="#151515" stroke-width="1.25"/>
<polyline points="865.5,626.4 862,629.9 865.5,633.4" fill="none" stroke="#333" stroke-width="1" stroke-linejoin="miter"/>
<path d="M860 624.9 Q855.5 629.9 860 634.9" fill="none" stroke="#333" stroke-width="1.1"/>
<text transform="translate(856 626.3) scale(0.925 1)" font-size="8.2" text-anchor="end" fill="#4a4a4a">A9</text>
<text transform="translate(833.5 625.4) scale(0.925 1)" font-size="8.2" text-anchor="end" fill="#4a4a4a">RED/BLK</text>
<polyline points="865.5,677.5 862,681 865.5,684.5" fill="none" stroke="#333" stroke-width="1" stroke-linejoin="miter"/>
<path d="M860 676 Q855.5 681 860 686" fill="none" stroke="#333" stroke-width="1.1"/>
<text transform="translate(856 677.4) scale(0.925 1)" font-size="8.2" text-anchor="end" fill="#4a4a4a">A19</text>
<text transform="translate(833.5 676.5) scale(0.925 1)" font-size="8.2" text-anchor="end" fill="#4a4a4a">RED</text>
<text transform="translate(925.8 703.8) scale(0.925 1)" font-size="8.2" text-anchor="end" fill="#4a4a4a">AUDIO UNIT </text>
<text transform="translate(925.8 713.0999999999999) scale(0.925 1)" font-size="8.2" text-anchor="end" fill="#4a4a4a">(BEHIND CENTER </text>
<text transform="translate(925.8 722.4) scale(0.925 1)" font-size="8.2" text-anchor="end" fill="#4a4a4a">OF DASH)</text>
<rect x="861.4" y="731.8" width="64.39999999999998" height="77.10000000000002" fill="#dadaff"/>
<line x1="861.4" y1="731.8" x2="925.8" y2="731.8" stroke="#222" stroke-width="1.5" stroke-dasharray="7.8 4.2"/>
<line x1="861.4" y1="731.8" x2="861.4" y2="808.9" stroke="#222" stroke-width="1.5" stroke-dasharray="7.8 4.2"/>
<line x1="861.4" y1="808.9" x2="925.8" y2="808.9" stroke="#222" stroke-width="1.5" stroke-dasharray="7.8 4.2"/>
<line x1="925.8" y1="808.9" x2="925.8" y2="731.8" stroke="#222" stroke-width="1.5" stroke-dasharray="7.8 4.2"/>
<polyline points="862,745.4 895.4,745.4 895.4,755.9" fill="none" stroke="#484858" stroke-width="1.15" stroke-linejoin="miter"/>
<polyline points="862,796.4 895.4,796.4 895.4,785.9" fill="none" stroke="#484858" stroke-width="1.15" stroke-linejoin="miter"/>
<circle cx="895.4" cy="770.9" r="11.4" fill="none" stroke="#333" stroke-width="1.1"/>
<path d="M890.9 758.6 Q892.9 755.9 895.4 755.9 Q897.9 755.9 899.9 758.6" fill="none" stroke="#333" stroke-width="1.1"/>
<path d="M890.9 783.5999999999999 Q892.9 786.3 895.4 786.3 Q897.9 786.3 899.9 783.5999999999999" fill="none" stroke="#333" stroke-width="1.1"/>
<polyline points="892.1999999999999,763.7 895.4,760.5 898.6,763.7" fill="none" stroke="#555" stroke-width="1" stroke-linejoin="miter"/>
<polyline points="892.1999999999999,778.0999999999999 895.4,781.3 898.6,778.0999999999999" fill="none" stroke="#555" stroke-width="1" stroke-linejoin="miter"/>
<path d="M895.4 761.0 C894.9 763.4,891.6 764.4,891.8 768.4 Q891.9 770.6 892.6 771.1 C891.8 773.9,893.4 777.4,895.4 778.4 L895.4 780.8" fill="none" stroke="#151515" stroke-width="1.25"/>
<ellipse cx="895.5" cy="771.1" rx="2.8" ry="1.4" fill="none" stroke="#151515" stroke-width="1.25"/>
<polyline points="865.5,741.9 862,745.4 865.5,748.9" fill="none" stroke="#333" stroke-width="1" stroke-linejoin="miter"/>
<path d="M860 740.4 Q855.5 745.4 860 750.4" fill="none" stroke="#333" stroke-width="1.1"/>
<text transform="translate(856 741.8) scale(0.925 1)" font-size="8.2" text-anchor="end" fill="#4a4a4a">9</text>
<text transform="translate(833.5 740.9) scale(0.925 1)" font-size="8.2" text-anchor="end" fill="#4a4a4a">RED/BLK</text>
<polyline points="865.5,792.9 862,796.4 865.5,799.9" fill="none" stroke="#333" stroke-width="1" stroke-linejoin="miter"/>
<path d="M860 791.4 Q855.5 796.4 860 801.4" fill="none" stroke="#333" stroke-width="1.1"/>
<text transform="translate(856 792.8) scale(0.925 1)" font-size="8.2" text-anchor="end" fill="#4a4a4a">4</text>
<text transform="translate(833.5 791.9) scale(0.925 1)" font-size="8.2" text-anchor="end" fill="#4a4a4a">RED</text>
<text transform="translate(925.8 818.0) scale(0.925 1)" font-size="8.2" text-anchor="end" fill="#4a4a4a">POWER MIRROR </text>
<text transform="translate(925.8 827.6) scale(0.925 1)" font-size="8.2" text-anchor="end" fill="#4a4a4a">SWITCH</text>
<line x1="772.7" y1="512.5" x2="772.7" y2="524" stroke="#111" stroke-width="1"/>
<path d="M770.5 515.0 L772.7 510.5 L774.9000000000001 515.0 Z" fill="#111"/>
<line x1="772.7" y1="545" x2="772.7" y2="556" stroke="#111" stroke-width="1"/>
<path d="M770.5 553.5 L772.7 558 L774.9000000000001 553.5 Z" fill="#111"/>
<text transform="translate(771.3 531.7) scale(0.925 1)" font-size="8.2" text-anchor="middle" fill="#4a4a4a">USA: EX</text>
<text transform="translate(771.3 540.7) scale(0.925 1)" font-size="8.2" text-anchor="middle" fill="#4a4a4a">CANADA: EX-L</text>
<line x1="211.5" y1="602" x2="211.5" y2="613" stroke="#111" stroke-width="1"/>
<path d="M209.3 604.5 L211.5 600 L213.7 604.5 Z" fill="#111"/>
<line x1="211.5" y1="635" x2="211.5" y2="645.5" stroke="#111" stroke-width="1"/>
<path d="M209.3 643.0 L211.5 647.5 L213.7 643.0 Z" fill="#111"/>
<text transform="translate(209.5 621.2) scale(0.925 1)" font-size="8.2" text-anchor="middle" fill="#4a4a4a">CANADA:</text>
<text transform="translate(209.5 630.2) scale(0.925 1)" font-size="8.2" text-anchor="middle" fill="#4a4a4a">EX-L</text>
<rect x="29.7" y="583.2" width="68.7" height="77.79999999999995" fill="#dadaff"/>
<line x1="29.7" y1="583.2" x2="98.4" y2="583.2" stroke="#222" stroke-width="1.5" stroke-dasharray="7.8 4.2"/>
<line x1="29.7" y1="583.2" x2="29.7" y2="661" stroke="#222" stroke-width="1.5" stroke-dasharray="7.8 4.2"/>
<line x1="29.7" y1="661" x2="98.4" y2="661" stroke="#222" stroke-width="1.5" stroke-dasharray="7.8 4.2"/>
<line x1="98.4" y1="661" x2="98.4" y2="583.2" stroke="#222" stroke-width="1.5" stroke-dasharray="7.8 4.2"/>
<polyline points="54.9,608.3499999999999 54.9,597.8 98,597.8" fill="none" stroke="#484858" stroke-width="1.15" stroke-linejoin="miter"/>
<polyline points="54.9,638.3499999999999 54.9,648.9 98,648.9" fill="none" stroke="#484858" stroke-width="1.15" stroke-linejoin="miter"/>
<circle cx="54.9" cy="623.3499999999999" r="11.4" fill="none" stroke="#333" stroke-width="1.1"/>
<path d="M50.4 611.05 Q52.4 608.3499999999999 54.9 608.3499999999999 Q57.4 608.3499999999999 59.4 611.05" fill="none" stroke="#333" stroke-width="1.1"/>
<path d="M50.4 636.0499999999998 Q52.4 638.7499999999999 54.9 638.7499999999999 Q57.4 638.7499999999999 59.4 636.0499999999998" fill="none" stroke="#333" stroke-width="1.1"/>
<polyline points="51.699999999999996,616.15 54.9,612.9499999999999 58.1,616.15" fill="none" stroke="#555" stroke-width="1" stroke-linejoin="miter"/>
<polyline points="51.699999999999996,630.5499999999998 54.9,633.7499999999999 58.1,630.5499999999998" fill="none" stroke="#555" stroke-width="1" stroke-linejoin="miter"/>
<path d="M54.9 613.4499999999999 C54.4 615.8499999999999,51.1 616.8499999999999,51.3 620.8499999999999 Q51.4 623.05 52.1 623.55 C51.3 626.3499999999999,52.9 629.8499999999999,54.9 630.8499999999999 L54.9 633.2499999999999" fill="none" stroke="#151515" stroke-width="1.25"/>
<ellipse cx="55.0" cy="623.55" rx="2.8" ry="1.4" fill="none" stroke="#151515" stroke-width="1.25"/>
<polyline points="94.5,594.3 98,597.8 94.5,601.3" fill="none" stroke="#333" stroke-width="1" stroke-linejoin="miter"/>
<path d="M101 592.8 Q105.5 597.8 101 602.8" fill="none" stroke="#333" stroke-width="1.1"/>
<text transform="translate(107 594.3) scale(0.925 1)" font-size="8.2" text-anchor="start" fill="#4a4a4a">3</text>
<text transform="translate(126.8 593.8) scale(0.925 1)" font-size="8.2" text-anchor="start" fill="#4a4a4a">RED/BLK</text>
<polyline points="94.5,645.4 98,648.9 94.5,652.4" fill="none" stroke="#333" stroke-width="1" stroke-linejoin="miter"/>
<path d="M101 643.9 Q105.5 648.9 101 653.9" fill="none" stroke="#333" stroke-width="1.1"/>
<text transform="translate(107 645.4) scale(0.925 1)" font-size="8.2" text-anchor="start" fill="#4a4a4a">2</text>
<text transform="translate(126.8 644.9) scale(0.925 1)" font-size="8.2" text-anchor="start" fill="#4a4a4a">RED</text>
<text transform="translate(29.7 672.0) scale(0.925 1)" font-size="8.2" text-anchor="start" fill="#4a4a4a">SEAT HEATER</text>
<text transform="translate(29.7 681.3) scale(0.925 1)" font-size="8.2" text-anchor="start" fill="#4a4a4a">SWITCH</text>
<rect x="29.7" y="704.7" width="68.7" height="78.0" fill="#dadaff"/>
<line x1="29.7" y1="704.7" x2="98.4" y2="704.7" stroke="#222" stroke-width="1.5" stroke-dasharray="7.8 4.2"/>
<line x1="29.7" y1="704.7" x2="29.7" y2="782.7" stroke="#222" stroke-width="1.5" stroke-dasharray="7.8 4.2"/>
<line x1="29.7" y1="782.7" x2="98.4" y2="782.7" stroke="#222" stroke-width="1.5" stroke-dasharray="7.8 4.2"/>
<line x1="98.4" y1="782.7" x2="98.4" y2="704.7" stroke="#222" stroke-width="1.5" stroke-dasharray="7.8 4.2"/>
<polyline points="54.9,729.9 54.9,719.4 98,719.4" fill="none" stroke="#484858" stroke-width="1.15" stroke-linejoin="miter"/>
<polyline points="54.9,759.9 54.9,770.4 98,770.4" fill="none" stroke="#484858" stroke-width="1.15" stroke-linejoin="miter"/>
<circle cx="54.9" cy="744.9" r="11.4" fill="none" stroke="#333" stroke-width="1.1"/>
<path d="M50.4 732.6 Q52.4 729.9 54.9 729.9 Q57.4 729.9 59.4 732.6" fill="none" stroke="#333" stroke-width="1.1"/>
<path d="M50.4 757.5999999999999 Q52.4 760.3 54.9 760.3 Q57.4 760.3 59.4 757.5999999999999" fill="none" stroke="#333" stroke-width="1.1"/>
<polyline points="51.699999999999996,737.7 54.9,734.5 58.1,737.7" fill="none" stroke="#555" stroke-width="1" stroke-linejoin="miter"/>
<polyline points="51.699999999999996,752.0999999999999 54.9,755.3 58.1,752.0999999999999" fill="none" stroke="#555" stroke-width="1" stroke-linejoin="miter"/>
<path d="M54.9 735.0 C54.4 737.4,51.1 738.4,51.3 742.4 Q51.4 744.6 52.1 745.1 C51.3 747.9,52.9 751.4,54.9 752.4 L54.9 754.8" fill="none" stroke="#151515" stroke-width="1.25"/>
<ellipse cx="55.0" cy="745.1" rx="2.8" ry="1.4" fill="none" stroke="#151515" stroke-width="1.25"/>
<polyline points="94.5,715.9 98,719.4 94.5,722.9" fill="none" stroke="#333" stroke-width="1" stroke-linejoin="miter"/>
<path d="M101 714.4 Q105.5 719.4 101 724.4" fill="none" stroke="#333" stroke-width="1.1"/>
<text transform="translate(107 715.9) scale(0.925 1)" font-size="8.2" text-anchor="start" fill="#4a4a4a">6</text>
<text transform="translate(126.8 715.4) scale(0.925 1)" font-size="8.2" text-anchor="start" fill="#4a4a4a">RED/BLK</text>
<polyline points="94.5,766.9 98,770.4 94.5,773.9" fill="none" stroke="#333" stroke-width="1" stroke-linejoin="miter"/>
<path d="M101 765.4 Q105.5 770.4 101 775.4" fill="none" stroke="#333" stroke-width="1.1"/>
<text transform="translate(107 766.9) scale(0.925 1)" font-size="8.2" text-anchor="start" fill="#4a4a4a">5</text>
<text transform="translate(126.8 766.4) scale(0.925 1)" font-size="8.2" text-anchor="start" fill="#4a4a4a">RED</text>
<text transform="translate(27 793.7) scale(0.925 1)" font-size="8.2" text-anchor="start" fill="#4a4a4a">HAZARD WARNING</text>
<text transform="translate(27 803.0) scale(0.925 1)" font-size="8.2" text-anchor="start" fill="#4a4a4a">SWITCH</text>
<rect x="29.7" y="832.4" width="68.7" height="37.60000000000002" fill="#dadaff"/>
<line x1="29.7" y1="832.4" x2="98.4" y2="832.4" stroke="#222" stroke-width="1.5" stroke-dasharray="7.8 4.2"/>
<line x1="29.7" y1="832.4" x2="29.7" y2="870" stroke="#222" stroke-width="1.5" stroke-dasharray="7.8 4.2"/>
<line x1="29.7" y1="870" x2="98.4" y2="870" stroke="#222" stroke-width="1.5" stroke-dasharray="7.8 4.2"/>
<line x1="98.4" y1="870" x2="98.4" y2="832.4" stroke="#222" stroke-width="1.5" stroke-dasharray="7.8 4.2"/>
<polyline points="54.9,860 54.9,847 98,847" fill="none" stroke="#484858" stroke-width="1.15" stroke-linejoin="miter"/>
<polyline points="94.5,843.5 98,847 94.5,850.5" fill="none" stroke="#333" stroke-width="1" stroke-linejoin="miter"/>
<path d="M101 842 Q105.5 847 101 852" fill="none" stroke="#333" stroke-width="1.1"/>
<text transform="translate(107 843.5) scale(0.925 1)" font-size="8.2" text-anchor="start" fill="#4a4a4a">23</text>
<text transform="translate(126.8 843) scale(0.925 1)" font-size="8.2" text-anchor="start" fill="#4a4a4a">RED/BLK</text>
</g>
</svg>
</body></html>
